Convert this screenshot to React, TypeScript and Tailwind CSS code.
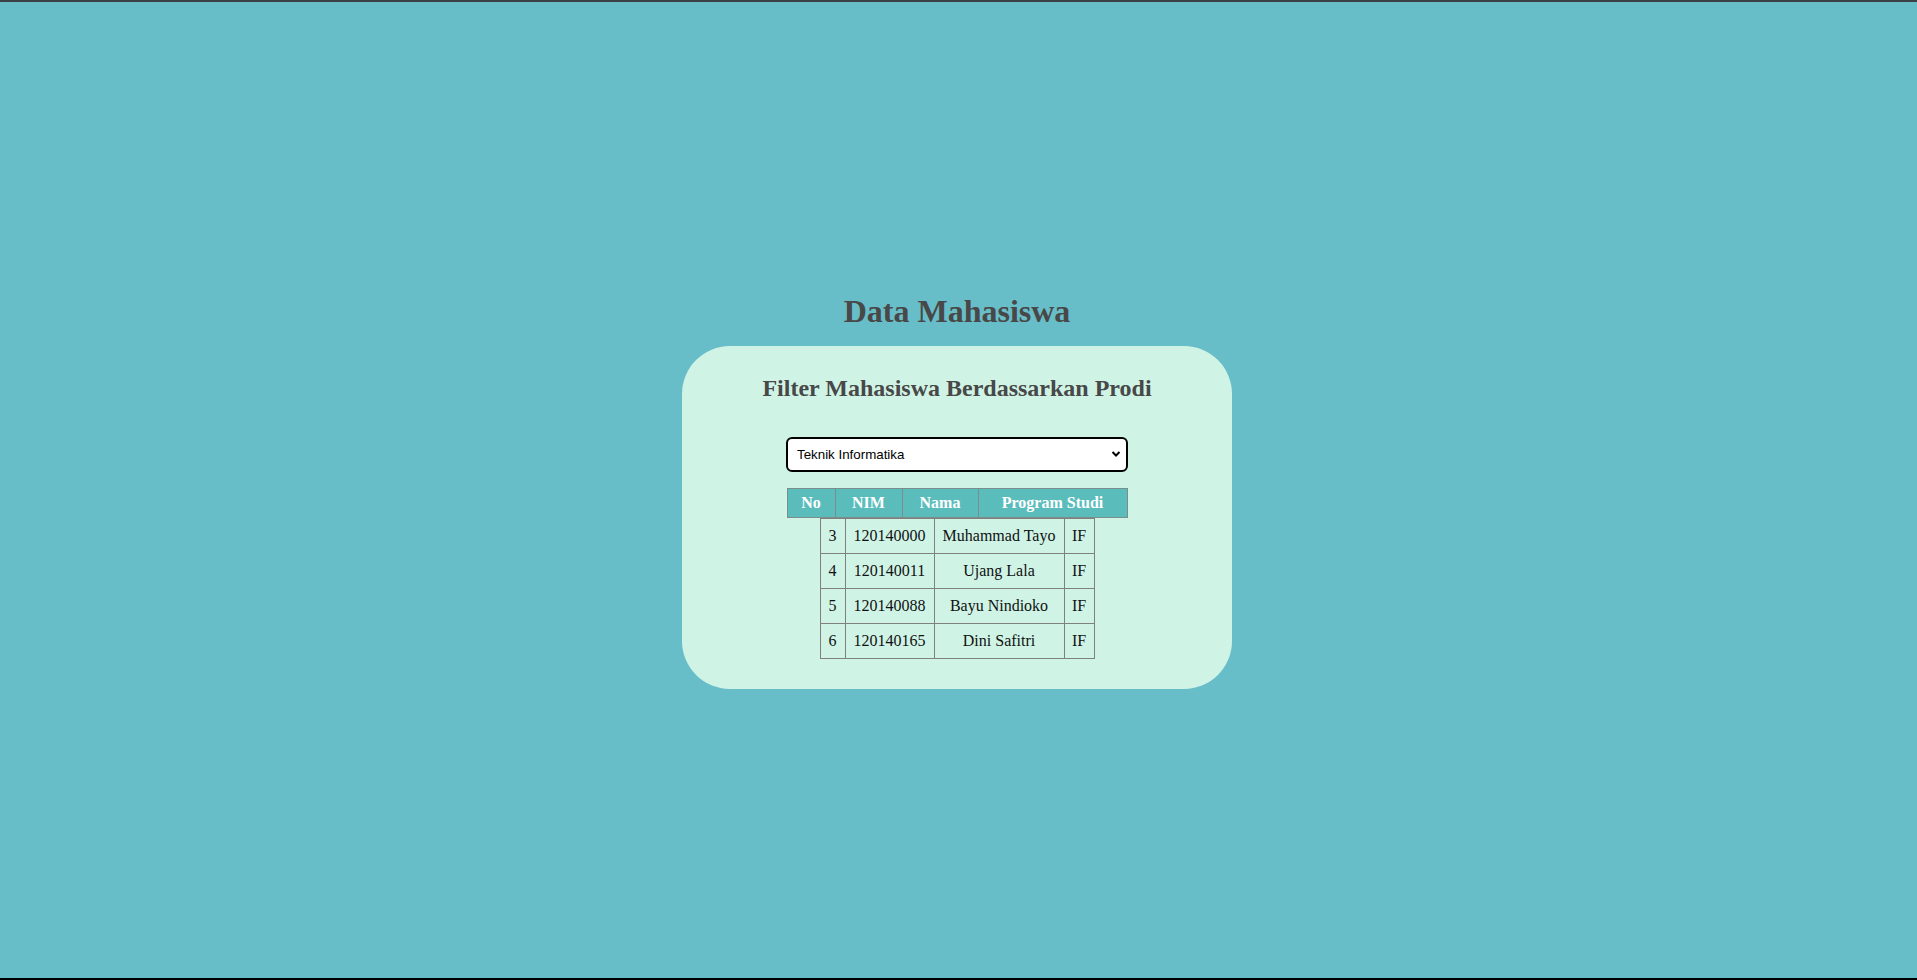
const rows = [
  { no: 3, nim: "120140000", nama: "Muhammad Tayo", prodi: "IF" },
  { no: 4, nim: "120140011", nama: "Ujang Lala", prodi: "IF" },
  { no: 5, nim: "120140088", nama: "Bayu Nindioko", prodi: "IF" },
  { no: 6, nim: "120140165", nama: "Dini Safitri", prodi: "IF" },
];

const App = () => {
  return (
    <div className="flex flex-col h-screen bg-[#68bec8] font-['Liberation_Serif',serif]">
      <div className="h-[2px] bg-[#3b4045]" />
      <div className="flex-1 flex flex-col items-center justify-center pr-[3px] pt-[2px]">
        <h1 className="text-[32px] leading-[37px] font-bold text-[#484848]">
          Data Mahasiswa
        </h1>
        <div className="mt-[16px] w-[550px] rounded-[48px] bg-[#cff4e6] flex flex-col items-center pt-[29px] pb-[30px]">
          <h2 className="text-[24px] leading-[27px] font-bold text-[#484848]">
            Filter Mahasiswa Berdassarkan Prodi
          </h2>
          <div className="relative mt-[35px] w-[342px]">
            <select className="appearance-none w-full h-[35px] bg-white border-2 border-black rounded-[6px] pl-[9px] text-[13.33px] text-black font-['Liberation_Sans',Arial,sans-serif]">
              <option>Teknik Informatika</option>
            </select>
            <svg
              className="absolute right-[7px] top-[13px] pointer-events-none"
              width="10"
              height="8"
              viewBox="0 0 10 8"
            >
              <path d="M1.5 2 L5 5.5 L8.5 2" stroke="black" strokeWidth="2" fill="none" />
            </svg>
          </div>
          <table className="mt-[16px] w-[341px] table-fixed border-collapse">
            <colgroup>
              <col className="w-[48px]" />
              <col className="w-[67px]" />
              <col className="w-[76px]" />
              <col />
            </colgroup>
            <thead>
              <tr className="h-[29px] bg-[#5bbdbb] text-white text-[16px]">
                <th className="border border-[#7b8f8a] font-bold">No</th>
                <th className="border border-[#7b8f8a] font-bold">NIM</th>
                <th className="border border-[#7b8f8a] font-bold">Nama</th>
                <th className="border border-[#7b8f8a] font-bold">Program Studi</th>
              </tr>
            </thead>
          </table>
          <table className="w-[275px] table-fixed border-collapse text-[16px] text-[#111]">
            <colgroup>
              <col className="w-[25px]" />
              <col className="w-[89px]" />
              <col className="w-[130px]" />
              <col />
            </colgroup>
            <tbody>
              {rows.map((r) => (
                <tr key={r.no} className="h-[35px]">
                  <td className="border border-[#808080] text-center">{r.no}</td>
                  <td className="border border-[#808080] text-center">{r.nim}</td>
                  <td className="border border-[#808080] text-center">{r.nama}</td>
                  <td className="border border-[#808080] text-center">{r.prodi}</td>
                </tr>
              ))}
            </tbody>
          </table>
        </div>
      </div>
      <div className="h-[2px] bg-black" />
    </div>
  );
};

export default App;
